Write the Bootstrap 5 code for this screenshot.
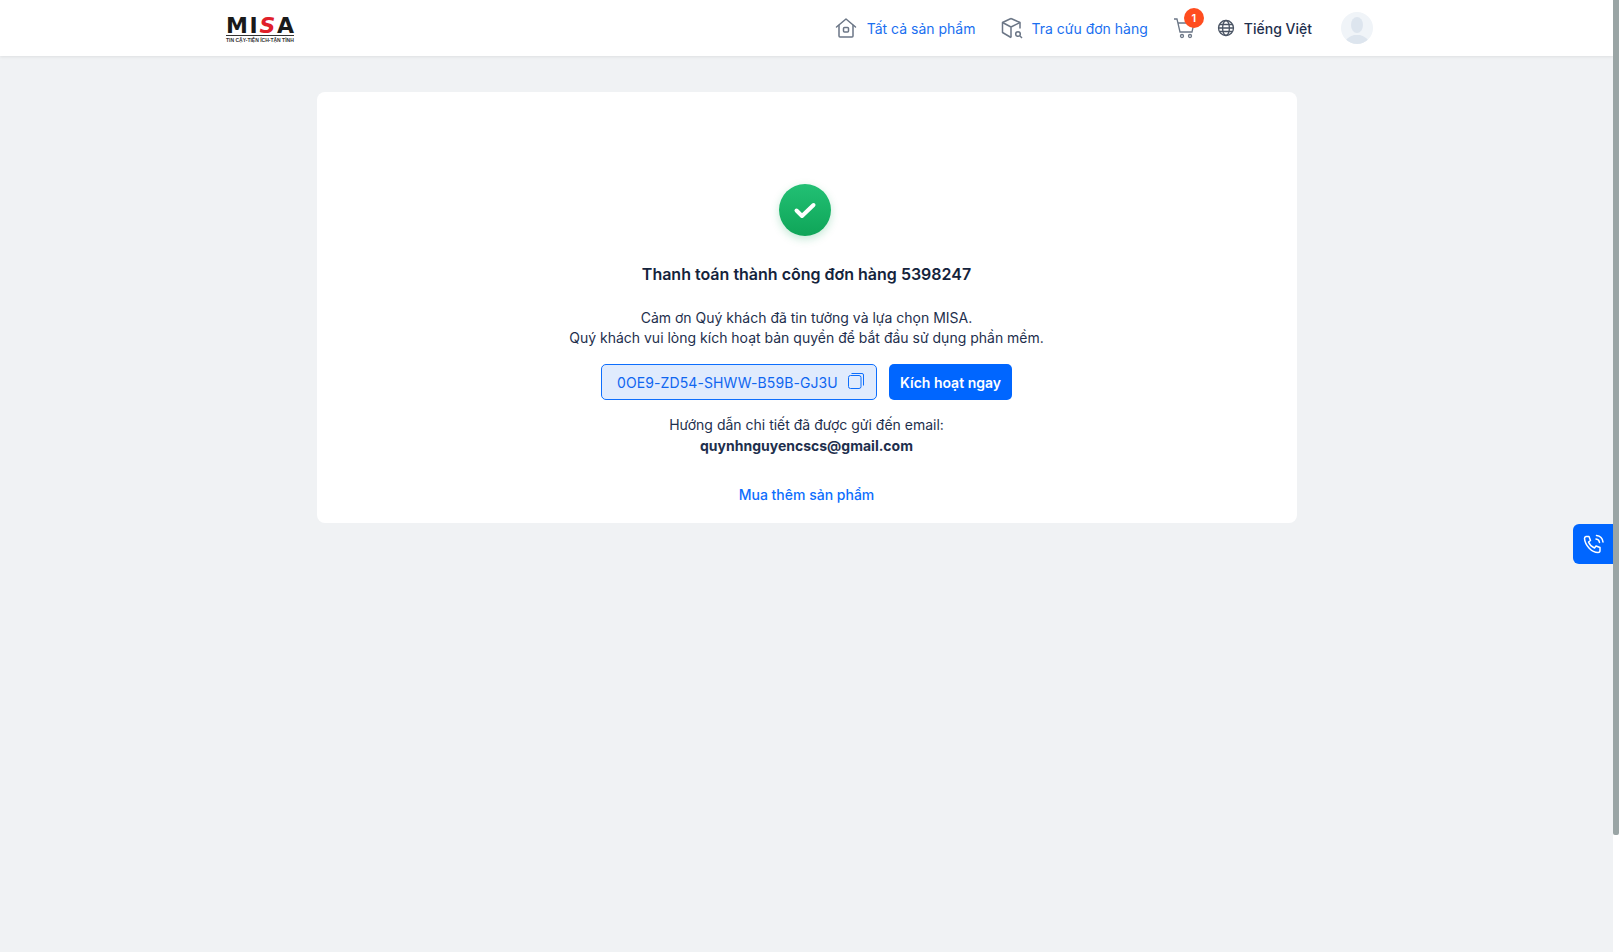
<!DOCTYPE html>
<html lang="vi">
<head>
  <meta charset="UTF-8" />
  <meta name="viewport" content="width=device-width, initial-scale=1.0"/>
  <title>Thanh toán thành công</title>
  <link href="https://cdn.jsdelivr.net/npm/bootstrap@5.3.2/dist/css/bootstrap.min.css" rel="stylesheet">
  <style>
    html, body { height: 100%; overflow: hidden; }
    body { background: #f0f2f4; font-family: Inter, "Noto Sans", sans-serif; font-size: 14px; color: #1e2f4d; }
    a { text-decoration: none; }
    .app-shell { width: 1613px; height: 952px; }
    .top-bar { height: 56px; background: #fff; box-shadow: 0 1px 3px rgba(0,0,0,.08); padding: 0 240px 0 226px; }
    .top-link { font-size: 14px; color: #1a6ff0; }
    .nav-gap { margin-right: 25px; }
    .nav-gap-wide { margin-right: 26px; }
    .icon-gap { gap: 10px; }
    .lang-text { color: #1e2f4d; font-size: 14px; font-weight: 500; margin-left: 9px; }
    .cart-wrap { width: 24px; height: 24px; margin-right: 20px; }
    .cart-count { top: -8px; right: -7px; width: 20px; height: 20px; background: #ff4d1f; font-size: 11px; font-weight: 600; color: #fff; }
    .avatar-ring { width: 32px; height: 32px; background: #f0f4f8; overflow: hidden; margin-left: 29px; }
    .logo-word { font-family: "DejaVu Sans", sans-serif; font-weight: 700; font-size: 22px; line-height: 18px; padding-top: 4px; color: #1a1a1a; }
    .logo-red { color: #e0202a; }
    .logo-tag { font-family: "Liberation Sans", sans-serif; font-size: 5px; line-height: 6px; font-weight: 700; color: #333; white-space: nowrap; border-top: 1px solid #333; padding-top: 1px; }
    .result-panel { width: 980px; height: 431px; margin-top: 36px; background: #fff; border-radius: 8px; padding-top: 92px; }
    .ok-circle { width: 52px; height: 52px; background: linear-gradient(180deg, #22c074, #0fa558); box-shadow: 0 3px 8px rgba(16,165,88,.25); margin-left: -5px; position: relative; left: -2px; }
    .result-title { font-size: 16px; font-weight: 600; color: #14233c; line-height: 24px; margin-top: 26px; }
    .result-text { line-height: 20px; margin-top: 22px; }
    .license-box { width: 276px; height: 36px; background: #e0ebfd; border: 1px solid #0d6efd; border-radius: 5px; color: #0f66f0; padding: 0 12px 0 15px; letter-spacing: .1px; }
    .copy-icon { margin-top: -3px; }
    .activate-btn { height: 36px; width: 123px; background: #0066ff; border-radius: 5px; color: #fff; font-weight: 600; font-size: 14px; padding: 0; border: 0; }
    .guide-text { line-height: 21px; margin-top: 14px; }
    .more-link { color: #0d6efd; font-weight: 500; display: inline-block; margin-top: 28px; }
    .call-tab { position: fixed; right: 6px; top: 524px; width: 40px; height: 40px; padding: 2px 0 0 2px; background: #0066ff; border-radius: 6px 0 0 6px; }
    .fake-rail { position: fixed; right: 0; top: 0; width: 6px; height: 952px; background: #fff; }
    .fake-thumb { width: 6px; height: 835px; background: #9aa5a5; border-radius: 0 0 2px 2px; }
  </style>
</head>
<body>
  <div class="app-shell">

    <!-- Header -->
    <header class="top-bar d-flex align-items-center justify-content-between">
      <a href="#" class="d-block" style="width:68px">
        <div class="logo-word d-flex justify-content-between"><span>M</span><span>I</span><span class="logo-red fst-italic">S</span><span>A</span></div>
        <div class="logo-tag">TIN CẬY-TIỆN ÍCH-TẬN TÌNH</div>
      </a>
      <nav class="d-flex align-items-center">
        <a href="#" class="top-link d-flex align-items-center icon-gap nav-gap-wide">
          <svg width="22" height="22" viewBox="0 0 22 22" fill="none" stroke="#6b7686" stroke-width="1.500" stroke-linecap="round" stroke-linejoin="round"><path d="M1.500 10 11 2l9.500 8"/><path d="M4 8.500V19a1 1 0 0 0 1 1h12a1 1 0 0 0 1-1V8.500"/><rect x="8.500" y="10.500" width="5" height="4.500" rx="1"/></svg>
          <span>Tất cả sản phẩm</span>
        </a>
        <a href="#" class="top-link d-flex align-items-center gap-2 nav-gap">
          <svg width="22" height="22" viewBox="0 0 22 22" fill="none" stroke="#6b7686" stroke-width="1.500" stroke-linejoin="round"><path d="M10 1.500 19 5.500v6"/><path d="M10 1.500 1.500 5.500v10L10 20.500"/><path d="M1.500 5.500 10 10l9-4.500M10 10v10.500"/><circle cx="17" cy="17" r="2.300"/><path d="m19 19 2 2"/></svg>
          <span>Tra cứu đơn hàng</span>
        </a>
        <a href="#" class="cart-wrap position-relative d-block">
          <svg width="24" height="24" viewBox="0 0 24 24" fill="none" stroke="#6b7686" stroke-width="1.300"><path d="M1 3h3l3 13h12l2-9H5"/><circle cx="9" cy="20" r="1.500"/><circle cx="17" cy="20" r="1.500"/></svg>
          <span class="cart-count position-absolute rounded-circle d-flex align-items-center justify-content-center">1</span>
        </a>
        <a href="#" class="d-flex align-items-center">
          <svg width="18" height="18" viewBox="0 0 18 18" fill="none" stroke="#4a5464" stroke-width="1.300"><circle cx="9" cy="9" r="7.500"/><ellipse cx="9" cy="9" rx="3.400" ry="7.500"/><path d="M1.500 9h15M2.500 5.500h13M2.500 12.500h13"/></svg>
          <span class="lang-text">Tiếng Việt</span>
        </a>
        <span class="avatar-ring rounded-circle d-block">
          <svg width="32" height="32" viewBox="0 0 32 32" fill="#dde5ee"><ellipse cx="16" cy="13" rx="6" ry="8"/><path d="M4 32c0-6 6-8 9-9h6c3 1 9 3 9 9z"/></svg>
        </span>
      </nav>
    </header>

    <!-- Result panel -->
    <main class="result-panel mx-auto text-center">
      <div class="ok-circle rounded-circle d-flex align-items-center justify-content-center mx-auto">
        <svg width="24" height="24" viewBox="0 0 24 24" fill="none" stroke="#fff" stroke-width="4" stroke-linecap="round" stroke-linejoin="round"><path d="M3.500 12.500 9 18 20.500 7"/></svg>
      </div>
      <h1 class="result-title mb-0">Thanh toán thành công đơn hàng 5398247</h1>
      <p class="result-text mb-0">Cảm ơn Quý khách đã tin tưởng và lựa chọn MISA.<br>Quý khách vui lòng kích hoạt bản quyền để bắt đầu sử dụng phần mềm.</p>
      <div class="d-flex justify-content-center gap-2 mt-3">
        <div class="license-box d-flex align-items-center justify-content-between">
          <span>0OE9-ZD54-SHWW-B59B-GJ3U</span>
          <svg class="copy-icon" width="16" height="16" viewBox="0 0 16 16" fill="none" stroke="#0d6efd" stroke-width="1"><rect x=".5" y="2.500" width="12.500" height="13" rx="2"/><path d="M3.500.5H14a1.500 1.500 0 0 1 1.500 1.500v10.500"/></svg>
        </div>
        <button class="activate-btn btn ms-1">Kích hoạt ngay</button>
      </div>
      <p class="guide-text mb-0">Hướng dẫn chi tiết đã được gửi đến email:<br><strong>quynhnguyencscs@gmail.com</strong></p>
      <a href="#" class="more-link">Mua thêm sản phẩm</a>
    </main>
  </div>

  <a href="#" class="call-tab d-flex align-items-center justify-content-center">
    <svg width="22" height="22" viewBox="0 0 22 22" fill="none" stroke="#fff" stroke-width="1.500" stroke-linecap="round" stroke-linejoin="round"><path d="M3 2.500h3l1.500 4-2 1.500a11 11 0 0 0 6 6l1.500-2 4 1.500v3a2 2 0 0 1-2 2C8.500 18.500 2 11 1.500 4.500a2 2 0 0 1 1.500-2z"/><path d="M13 5a4 4 0 0 1 3.500 3.500M13.500 1.500A7.500 7.500 0 0 1 20 8"/></svg>
  </a>

  <div class="fake-rail"><div class="fake-thumb"></div></div>
</body>
</html>
